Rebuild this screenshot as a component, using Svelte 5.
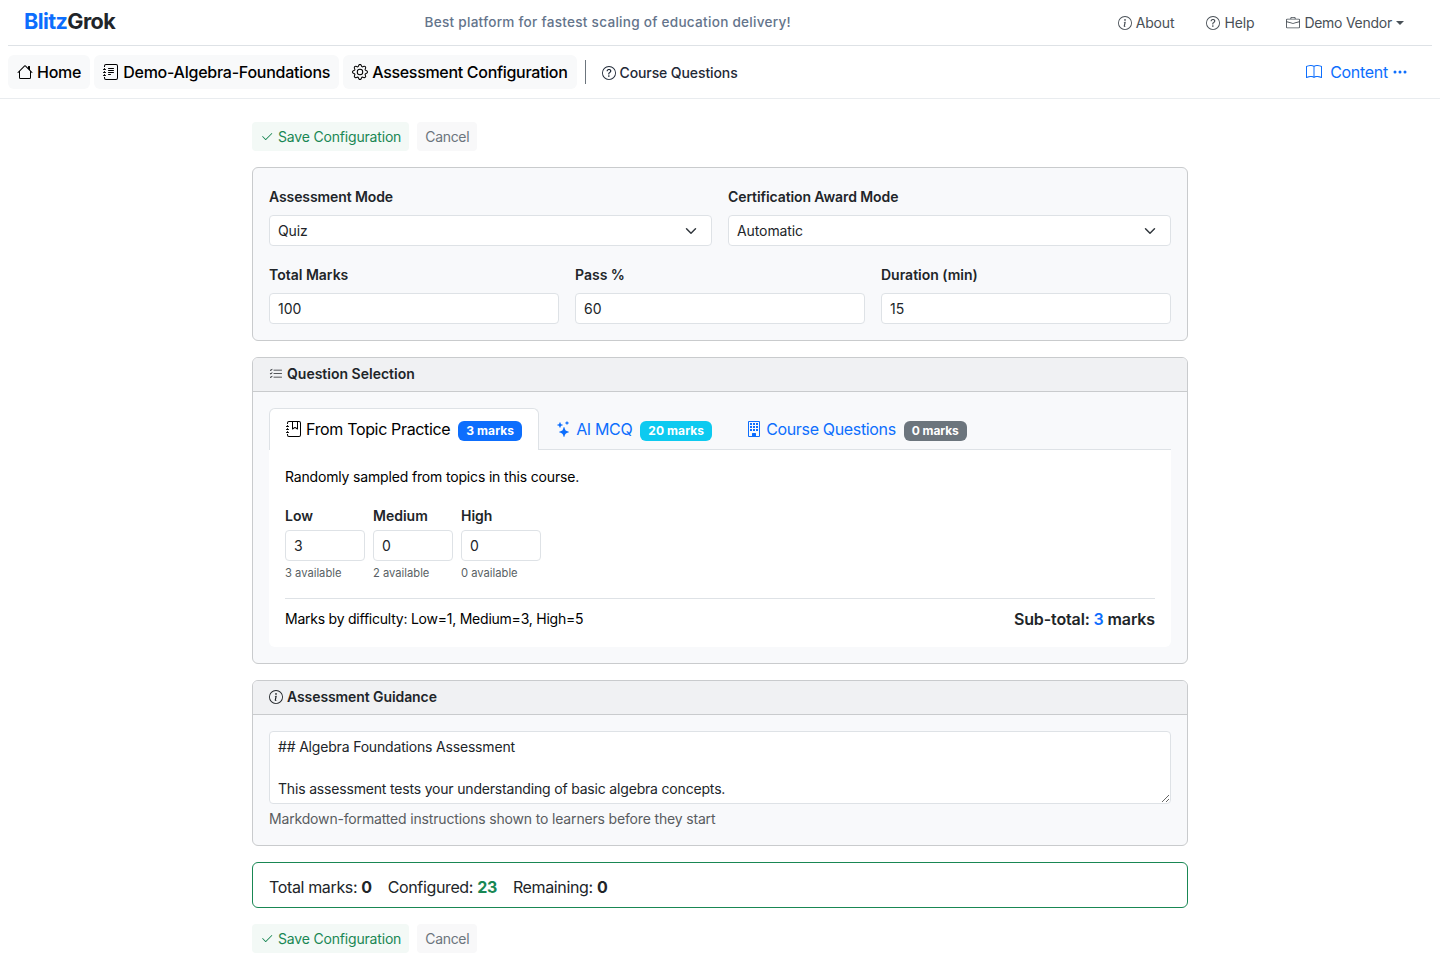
<script lang="ts">
  const ring = 'M8 15A7 7 0 1 1 8 1a7 7 0 0 1 0 14m0 1A8 8 0 1 0 8 0a8 8 0 0 0 0 16';
  const journal =
    'M3 0h10a2 2 0 0 1 2 2v12a2 2 0 0 1-2 2H3a2 2 0 0 1-2-2v-1h1v1a1 1 0 0 0 1 1h10a1 1 0 0 0 1-1V2a1 1 0 0 0-1-1H3a1 1 0 0 0-1 1v1H1V2a2 2 0 0 1 2-2M1 5v-.5a.5.5 0 0 1 1 0V5h.5a.5.5 0 0 1 0 1h-2a.5.5 0 0 1 0-1zm0 3v-.5a.5.5 0 0 1 1 0V8h.5a.5.5 0 0 1 0 1h-2a.5.5 0 0 1 0-1zm0 3v-.5a.5.5 0 0 1 1 0v.5h.5a.5.5 0 0 1 0 1h-2a.5.5 0 0 1 0-1z';
  const icons: Record<string, string[]> = {
    info: [ring, 'm8.93 6.588-2.29.287-.082.38.45.083c.294.07.352.176.288.469l-.738 3.468c-.194.897.105 1.319.808 1.319.545 0 1.178-.252 1.465-.598l.088-.416c-.2.176-.492.246-.686.246-.275 0-.375-.193-.304-.533zM9 4.5a1 1 0 1 1-2 0 1 1 0 0 1 2 0'],
    question: [ring, 'M5.255 5.786a.237.237 0 0 0 .241.247h.825c.138 0 .248-.113.266-.25.09-.656.54-1.134 1.342-1.134.686 0 1.314.343 1.314 1.168 0 .635-.374.927-.965 1.371-.673.489-1.206 1.06-1.168 1.987l.003.217a.25.25 0 0 0 .25.246h.811a.25.25 0 0 0 .25-.25v-.105c0-.718.273-.927 1.01-1.486.609-.463 1.244-.977 1.244-2.056 0-1.511-1.276-2.241-2.673-2.241-1.267 0-2.655.59-2.75 2.286m1.557 5.763c0 .533.425.927 1.01.927.609 0 1.028-.394 1.028-.927 0-.552-.42-.94-1.029-.94-.584 0-1.009.388-1.009.94'],
    briefcase: ['M6.5 1A1.5 1.5 0 0 0 5 2.5V3H1.5A1.5 1.5 0 0 0 0 4.5v8A1.5 1.5 0 0 0 1.5 14h13a1.5 1.5 0 0 0 1.5-1.5v-8A1.5 1.5 0 0 0 14.5 3H11v-.5A1.5 1.5 0 0 0 9.5 1zm0 1h3a.5.5 0 0 1 .5.5V3H6v-.5a.5.5 0 0 1 .5-.5m1.886 6.914L15 7.151V12.5a.5.5 0 0 1-.5.5h-13a.5.5 0 0 1-.5-.5V7.15l6.614 1.764a1.5 1.5 0 0 0 .772 0M1.5 4h13a.5.5 0 0 1 .5.5v1.616L8.129 7.948a.5.5 0 0 1-.258 0L1 6.116V4.5a.5.5 0 0 1 .5-.5'],
    house: ['M8.707 1.5a1 1 0 0 0-1.414 0L.646 8.146a.5.5 0 0 0 .708.708L2 8.207V13.5A1.5 1.5 0 0 0 3.5 15h9a1.5 1.5 0 0 0 1.5-1.5V8.207l.646.647a.5.5 0 0 0 .708-.708L13 5.793V2.5a.5.5 0 0 0-.5-.5h-1a.5.5 0 0 0-.5.5v1.293zM13 7.207V13.5a.5.5 0 0 1-.5.5h-9a.5.5 0 0 1-.5-.5V7.207l5-5z'],
    journalText: [journal, 'M5 10.5a.5.5 0 0 1 .5-.5h2a.5.5 0 0 1 0 1h-2a.5.5 0 0 1-.5-.5m0-2a.5.5 0 0 1 .5-.5h5a.5.5 0 0 1 0 1h-5a.5.5 0 0 1-.5-.5m0-2a.5.5 0 0 1 .5-.5h5a.5.5 0 0 1 0 1h-5a.5.5 0 0 1-.5-.5m0-2a.5.5 0 0 1 .5-.5h5a.5.5 0 0 1 0 1h-5a.5.5 0 0 1-.5-.5'],
    journalMark: [journal, 'M6 8V1h1v6.117L8.743 6.07a.5.5 0 0 1 .514 0L11 7.117V1h1v7a.5.5 0 0 1-.757.429L9 7.083 6.757 8.43A.5.5 0 0 1 6 8'],
    gear: ['M8 4.754a3.246 3.246 0 1 0 0 6.492 3.246 3.246 0 0 0 0-6.492M5.754 8a2.246 2.246 0 1 1 4.492 0 2.246 2.246 0 0 1-4.492 0', 'M9.796 1.343c-.527-1.79-3.065-1.79-3.592 0l-.094.319a.873.873 0 0 1-1.255.52l-.292-.16c-1.64-.892-3.433.902-2.54 2.541l.159.292a.873.873 0 0 1-.52 1.255l-.319.094c-1.79.527-1.79 3.065 0 3.592l.319.094a.873.873 0 0 1 .52 1.255l-.16.292c-.892 1.64.901 3.434 2.541 2.54l.292-.159a.873.873 0 0 1 1.255.52l.094.319c.527 1.79 3.065 1.79 3.592 0l.094-.319a.873.873 0 0 1 1.255-.52l.292.16c1.64.893 3.434-.902 2.54-2.541l-.159-.292a.873.873 0 0 1 .52-1.255l.319-.094c1.79-.527 1.79-3.065 0-3.592l-.319-.094a.873.873 0 0 1-.52-1.255l.16-.292c.893-1.64-.902-3.433-2.541-2.54l-.292.159a.873.873 0 0 1-1.255-.52zm-2.633.283c.246-.835 1.428-.835 1.674 0l.094.319a1.873 1.873 0 0 0 2.693 1.115l.291-.16c.764-.415 1.6.42 1.184 1.185l-.159.292a1.873 1.873 0 0 0 1.116 2.692l.318.094c.835.246.835 1.428 0 1.674l-.319.094a1.873 1.873 0 0 0-1.115 2.693l.16.291c.415.764-.42 1.6-1.185 1.184l-.291-.159a1.873 1.873 0 0 0-2.693 1.116l-.094.318c-.246.835-1.428.835-1.674 0l-.094-.319a1.873 1.873 0 0 0-2.692-1.115l-.292.16c-.764.415-1.6-.42-1.184-1.185l.159-.291A1.873 1.873 0 0 0 1.945 8.93l-.319-.094c-.835-.246-.835-1.428 0-1.674l.319-.094A1.873 1.873 0 0 0 3.06 4.377l-.16-.292c-.415-.764.42-1.6 1.185-1.184l.292.159a1.873 1.873 0 0 0 2.692-1.115z'],
    book: ['M1 2.828c.885-.37 2.154-.769 3.388-.893 1.33-.134 2.458.063 3.112.752v9.746c-.935-.53-2.12-.603-3.213-.493-1.18.12-2.37.461-3.287.811zm7.5-.141c.654-.689 1.782-.886 3.112-.752 1.234.124 2.503.523 3.388.893v9.923c-.918-.35-2.107-.692-3.287-.81-1.094-.111-2.278-.039-3.213.492zM8 1.783C7.015.936 5.587.81 4.287.94c-1.514.153-3.042.672-3.994 1.105A.5.5 0 0 0 0 2.5v11a.5.5 0 0 0 .707.455c.882-.4 2.303-.881 3.68-1.02 1.409-.142 2.59.087 3.223.877a.5.5 0 0 0 .78 0c.633-.79 1.814-1.019 3.222-.877 1.378.139 2.8.62 3.681 1.02A.5.5 0 0 0 16 13.5v-11a.5.5 0 0 0-.293-.455c-.952-.433-2.48-.952-3.994-1.105C10.413.809 8.985.936 8 1.783'],
    dots: ['M3 9.5a1.5 1.5 0 1 1 0-3 1.5 1.5 0 0 1 0 3m5 0a1.5 1.5 0 1 1 0-3 1.5 1.5 0 0 1 0 3m5 0a1.5 1.5 0 1 1 0-3 1.5 1.5 0 0 1 0 3'],
    check: ['M13.854 3.646a.5.5 0 0 1 0 .708l-7 7a.5.5 0 0 1-.708 0l-3.5-3.5a.5.5 0 1 1 .708-.708L6.5 10.293l6.646-6.647a.5.5 0 0 1 .708 0'],
    list: ['M5 11.5a.5.5 0 0 1 .5-.5h9a.5.5 0 0 1 0 1h-9a.5.5 0 0 1-.5-.5m0-4a.5.5 0 0 1 .5-.5h9a.5.5 0 0 1 0 1h-9a.5.5 0 0 1-.5-.5m0-4a.5.5 0 0 1 .5-.5h9a.5.5 0 0 1 0 1h-9a.5.5 0 0 1-.5-.5M3.854 2.146a.5.5 0 0 1 0 .708l-1.5 1.5a.5.5 0 0 1-.708 0l-.5-.5a.5.5 0 1 1 .708-.708L2 3.293l1.146-1.147a.5.5 0 0 1 .708 0m0 4a.5.5 0 0 1 0 .708l-1.5 1.5a.5.5 0 0 1-.708 0l-.5-.5a.5.5 0 1 1 .708-.708L2 7.293l1.146-1.147a.5.5 0 0 1 .708 0m0 4a.5.5 0 0 1 0 .708l-1.5 1.5a.5.5 0 0 1-.708 0l-.5-.5a.5.5 0 0 1 .708-.708l.146.147 1.146-1.147a.5.5 0 0 1 .708 0'],
    stars: ['M7.657 6.247c.11-.33.576-.33.686 0l.645 1.937a2.89 2.89 0 0 0 1.829 1.828l1.936.645c.33.11.33.576 0 .686l-1.937.645a2.89 2.89 0 0 0-1.828 1.829l-.645 1.936a.361.361 0 0 1-.686 0l-.645-1.937a2.89 2.89 0 0 0-1.828-1.828l-1.937-.645a.361.361 0 0 1 0-.686l1.937-.645a2.89 2.89 0 0 0 1.828-1.828zM3.794 1.148a.217.217 0 0 1 .412 0l.387 1.162c.173.518.579.924 1.097 1.097l1.162.387a.217.217 0 0 1 0 .412l-1.162.387A1.73 1.73 0 0 0 4.593 5.69l-.387 1.162a.217.217 0 0 1-.412 0L3.407 5.69A1.73 1.73 0 0 0 2.31 4.593l-1.162-.387a.217.217 0 0 1 0-.412l1.162-.387A1.73 1.73 0 0 0 3.407 2.31zM10.863.099a.145.145 0 0 1 .274 0l.258.774c.115.346.386.617.732.732l.774.258a.145.145 0 0 1 0 .274l-.774.258a1.16 1.16 0 0 0-.732.732l-.258.774a.145.145 0 0 1-.274 0l-.258-.774a1.16 1.16 0 0 0-.732-.732L9.1 2.137a.145.145 0 0 1 0-.274l.774-.258c.346-.115.617-.386.732-.732z'],
    building: ['M2 1a1 1 0 0 1 1-1h10a1 1 0 0 1 1 1v14a1 1 0 0 1-1 1H3a1 1 0 0 1-1-1zm11 0H3v14h3v-2.5a.5.5 0 0 1 .5-.5h3a.5.5 0 0 1 .5.5V15h3z', 'M4 2h2v2H4zM7 2h2v2H7zM10 2h2v2h-2zM4 5h2v2H4zM7 5h2v2H7zM10 5h2v2h-2zM4 8h2v2H4zM7 8h2v2H7zM10 8h2v2h-2z'],
  };

  const settings = [
    { label: 'Total Marks', value: '100' },
    { label: 'Pass %', value: '60' },
    { label: 'Duration (min)', value: '15' },
  ];
  const levels = [
    { label: 'Low', value: '3', available: 3 },
    { label: 'Medium', value: '0', available: 2 },
    { label: 'High', value: '0', available: 0 },
  ];
  const guidance = '## Algebra Foundations Assessment\n\nThis assessment tests your understanding of basic algebra concepts.';
</script>

{#snippet icon(name: string)}
  <svg class="icon" viewBox="0 0 16 16" aria-hidden="true">
    {#each icons[name] as d}<path {d} />{/each}
  </svg>
{/snippet}

{#snippet actions()}
  <div class="actions">
    <button class="btn save">{@render icon('check')}<span>Save Configuration</span></button>
    <button class="btn cancel"><span>Cancel</span></button>
  </div>
{/snippet}

<header class="top">
  <a class="brand" href="#top"><span>Blitz</span>Grok</a>
  <p class="tagline">Best platform for fastest scaling of education delivery!</p>
  <nav class="account">
    <a class="about" href="#about">{@render icon('info')}<span>About</span></a>
    <a class="help" href="#help">{@render icon('question')}<span>Help</span></a>
    <a class="vendor" href="#vendor">{@render icon('briefcase')}<span>Demo Vendor</span><i class="caret"></i></a>
  </nav>
</header>

<nav class="crumbs">
  <a class="pill home" href="#home">{@render icon('house')}<span>Home</span></a>
  <a class="pill course" href="#course">{@render icon('journalText')}<span>Demo-Algebra-Foundations</span></a>
  <a class="pill config" href="#config">{@render icon('gear')}<span>Assessment Configuration</span></a>
  <i class="rule"></i>
  <a class="questions" href="#questions">{@render icon('question')}<span>Course Questions</span></a>
  <a class="content" href="#content">{@render icon('book')}<span>Content</span>{@render icon('dots')}</a>
</nav>

<main>
  {@render actions()}

  <section class="card">
    <div class="body">
      <div class="grid two">
        <label class="field"><span class="lbl">Assessment Mode</span>
          <span class="input select"><span>Quiz</span><svg viewBox="0 0 16 16"><path d="m2 5 6 6 6-6" /></svg></span></label>
        <label class="field"><span class="lbl">Certification Award Mode</span>
          <span class="input select"><span>Automatic</span><svg viewBox="0 0 16 16"><path d="m2 5 6 6 6-6" /></svg></span></label>
      </div>
      <div class="grid three">
        {#each settings as s}
          <label class="field"><span class="lbl">{s.label}</span><input class="input" value={s.value} /></label>
        {/each}
      </div>
    </div>
  </section>

  <section class="card">
    <h2>{@render icon('list')}<span>Question Selection</span></h2>
    <div class="body">
      <div class="tabs">
        <a class="tab active" href="#topic">{@render icon('journalMark')}<span class="name">From Topic Practice</span><b class="badge blue">3 marks</b></a>
        <a class="tab" href="#ai">{@render icon('stars')}<span class="name">AI MCQ</span><b class="badge cyan">20 marks</b></a>
        <a class="tab" href="#cq">{@render icon('building')}<span class="name">Course Questions</span><b class="badge gray">0 marks</b></a>
      </div>
      <div class="pane">
        <p class="lead">Randomly sampled from topics in this course.</p>
        <div class="levels">
          {#each levels as l}
            <label class="level"><span class="lvl">{l.label}</span><input class="input" value={l.value} /><small>{l.available} available</small></label>
          {/each}
        </div>
        <div class="totals">
          <span class="by">Marks by difficulty: Low=1, Medium=3, High=5</span>
          <strong>Sub-total: <em>3</em> marks</strong>
        </div>
      </div>
    </div>
  </section>

  <section class="card">
    <h2 class="guide">{@render icon('info')}<span>Assessment Guidance</span></h2>
    <div class="body">
      <textarea class="input" rows="3" value={guidance}></textarea>
      <p class="hint">Markdown-formatted instructions shown to learners before they start</p>
    </div>
  </section>

  <section class="summary">
    <span>Total marks: <b>0</b></span>
    <span>Configured: <b class="ok">23</b></span>
    <span>Remaining: <b>0</b></span>
  </section>

  {@render actions()}
</main>

<style>
  :global(body) { margin: 0; background: #fff; color: #212529; font: 400 16px/24px Inter, sans-serif; }
  :global(#app) { height: 977px; overflow: hidden; }
  a { color: inherit; text-decoration: none; }
  p, h2 { margin: 0; }
  .icon { width: 1em; height: 1em; fill: currentColor; flex: none; display: block; }

  .top { box-sizing: border-box; height: 46px; margin: 0 8px; padding: 0 28px 0 16px; border-bottom: 1px solid #dee2e6; display: grid; grid-template-columns: 400.5px 1fr auto; align-items: center; }
  .brand { font-size: 21.6px; font-weight: 700; letter-spacing: -0.6px; line-height: 24px; padding-bottom: 4px; }
  .brand span { color: #0d6efd; }
  .tagline { font-size: 13.6px; line-height: 20px; font-weight: 500; letter-spacing: 0.26px; color: #64748b; padding-bottom: 1px; white-space: nowrap; }
  .account { display: flex; font-size: 14px; line-height: 21px; color: #495057; letter-spacing: -0.15px; }
  .account a { display: flex; align-items: center; gap: 4px; }
  .about, .help { margin-right: 32px; }
  .vendor { letter-spacing: -0.26px; }
  .caret { width: 0; border: 4px solid transparent; border-top-color: currentColor; border-bottom: 0; }

  .crumbs { box-sizing: border-box; height: 53px; padding: 9px 32px 9px 8px; border-bottom: 1px solid #e9ecef; display: flex; align-items: flex-start; gap: 4px; font-weight: 500; }
  .pill { box-sizing: border-box; height: 34px; padding: 0 9px; border-radius: 6px; background: #f8f9fa; color: #000; display: flex; align-items: center; gap: 4px; letter-spacing: -0.25px; white-space: nowrap; }
  .config { letter-spacing: -0.31px; }
  .rule { width: 1px; height: 24px; margin: 5px 12px 0 4px; background: #6c757d; }
  .questions { height: 35px; display: flex; align-items: center; gap: 4px; font-size: 14px; color: #1f2937; letter-spacing: -0.1px; }
  .content { height: 34px; margin-left: auto; display: flex; align-items: center; font-weight: 400; color: #0d6efd; gap: 4px; letter-spacing: -0.28px; }
  .content .icon:first-child { margin-right: 4px; }

  main { width: 936px; margin: 0 auto; padding-top: 23px; display: flex; flex-direction: column; gap: 16px; }
  .actions { display: flex; gap: 8px; height: 29px; }
  .btn { border: 0; height: 29px; border-radius: 4px; font: 400 14px/21px Inter, sans-serif; display: flex; align-items: center; gap: 4px; padding: 0 8px; white-space: nowrap; letter-spacing: -0.18px; }
  .save { background: #f3f9f6; color: #198754; }
  .cancel { background: #f8f8f9; color: #6c757d; letter-spacing: -0.3px; }

  .card { border: 1px solid #c9cbcd; border-radius: 6px; background: #f8f9fb; overflow: hidden; }
  .card h2 { box-sizing: border-box; height: 34px; padding: 0 16px 2px; background: #f0f1f3; border-bottom: 1px solid #c9cbcd; display: flex; align-items: center; gap: 4px; font-size: 14px; line-height: 21px; font-weight: 600; }
  .card .guide { letter-spacing: -0.09px; }
  .body { padding: 16px; }
  .grid { display: grid; gap: 16px; }
  .two { grid-template-columns: 1fr 1fr; letter-spacing: -0.1px; }
  .three { grid-template-columns: 1fr 1fr 1fr; margin-top: 16px; }
  .field { display: flex; flex-direction: column; }
  .lbl { height: 21px; padding: 2px 0 8px; font-size: 14px; line-height: 21px; font-weight: 600; }
  .input { box-sizing: border-box; display: block; width: 100%; height: 31px; padding: 4px 8px; border: 1px solid #dee2e6; border-radius: 4px; background: #fff; color: #212529; font: 400 14px/21px Inter, sans-serif; outline: 0; }
  .select { display: flex; justify-content: space-between; align-items: center; padding-right: 14px; }
  .select svg { width: 12px; height: 12px; fill: none; stroke: #343a40; stroke-width: 2; stroke-linecap: round; stroke-linejoin: round; }

  .tabs { height: 42px; display: flex; box-shadow: inset 0 -1px #dee2e6; }
  .tab { box-sizing: border-box; height: 42px; padding: 0 17px; display: flex; align-items: center; color: #0d6efd; white-space: nowrap; }
  .tab.active { background: #fff; color: #000; border: 1px solid #dee2e6; border-bottom: 0; border-radius: 6px 6px 0 0; padding: 0 16px 1px; }
  .name { margin: 0 8px 0 4px; letter-spacing: -0.34px; }
  .badge { height: 20px; margin-top: 3px; padding: 0 8px; border-radius: 6px; font-size: 12px; line-height: 20px; font-weight: 700; color: #fff; letter-spacing: 0.08px; }
  .blue { background: #0d6efd; }
  .cyan { background: #0dcaf0; }
  .gray { background: #6c757d; letter-spacing: -0.1px; }
  .pane { background: #fff; border-radius: 0 0 6px 6px; padding: 16px; color: #000; }
  .lead { font-size: 14px; line-height: 21px; height: 23px; letter-spacing: -0.165px; }
  .levels { display: flex; gap: 8px; margin-top: 16px; }
  .level { width: 80px; display: flex; flex-direction: column; color: #212529; }
  .lvl { font-size: 14px; font-weight: 600; line-height: 21px; margin-bottom: 4px; }
  .level small { font-size: 11.2px; line-height: 17px; margin-top: 4px; color: #595f64; }
  .totals { display: flex; justify-content: space-between; align-items: center; border-top: 1px solid #dee2e6; margin-top: 16px; padding-top: 8px; }
  .by { font-size: 14px; letter-spacing: -0.235px; }
  .totals strong { font-weight: 600; color: #212529; letter-spacing: -0.13px; }
  .totals em { font-style: normal; color: #0d6efd; }

  textarea.input { height: 73px; resize: vertical; overflow: hidden; letter-spacing: -0.18px; }
  .hint { font-size: 14px; line-height: 21px; height: 21px; padding-top: 4px; color: #595c5f; letter-spacing: -0.165px; }

  .summary { box-sizing: border-box; height: 46px; border: 1px solid #198754; border-radius: 6px; padding: 12px 16px 0; display: flex; gap: 16px; white-space: nowrap; letter-spacing: -0.36px; }
  .summary b { font-weight: 700; }
  .ok { color: #198754; }
</style>
